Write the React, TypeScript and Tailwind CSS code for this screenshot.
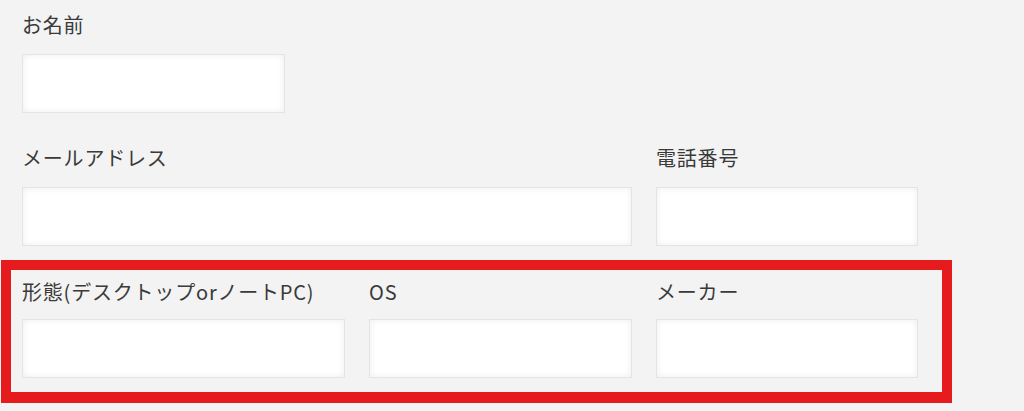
const font = { fontFamily: '"Noto Sans CJK JP", "Noto Sans", sans-serif' };

function Field({ label, width, gap = 'mt-[14px]' }: { label: string; width: string; gap?: string }) {
  return (
    <div className="flex flex-col">
      <label className="text-[20px] leading-[30px] tracking-[0.8px] text-[#3a3a3a] whitespace-nowrap">{label}</label>
      <input
        type="text"
        className={`${gap} ${width} h-[59px] bg-white border border-[#e2e5e4] shadow-[inset_0_0_7px_rgba(0,0,0,0.07)] outline-none`}
      />
    </div>
  );
}

export default function App() {
  return (
    <main className="w-[1024px] h-[411px] bg-[#f3f3f3] pl-[1px] pt-[10px]" style={font}>
      {/* お名前 */}
      <div className="pl-[21px]">
        <Field label="お名前" width="w-[263px]" />
      </div>

      {/* メール・電話 */}
      <div className="pl-[21px] mt-[30px] flex gap-6">
        <Field label="メールアドレス" width="w-[610px]" />
        <Field label="電話番号" width="w-[262px]" />
      </div>

      {/* 赤枠の行 */}
      <div className="mt-[14px] w-[951px] border-[10px] border-b-[11px] border-[#e51b1e] pl-[11px] pt-[7px] pb-[14px] flex gap-6">
        <Field label="形態(デスクトップorノートPC)" width="w-[323px]" gap="mt-[12px]" />
        <Field label="OS" width="w-[263px]" gap="mt-[12px]" />
        <Field label="メーカー" width="w-[262px]" gap="mt-[12px]" />
      </div>
    </main>
  );
}
